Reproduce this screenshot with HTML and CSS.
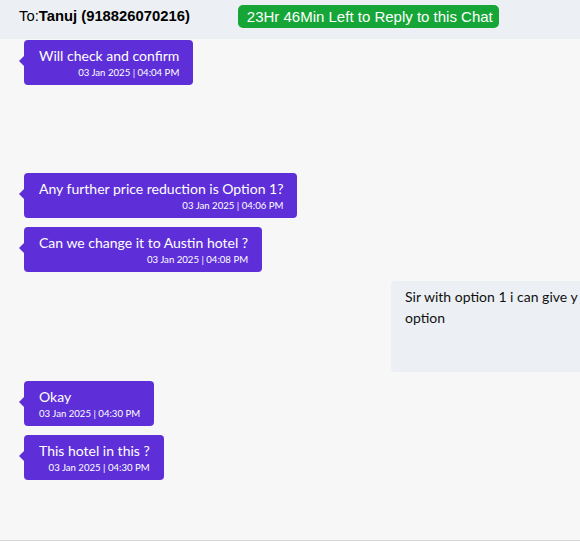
FILE: index.html
```html
<!DOCTYPE html>
<html>
<head>
<meta charset="utf-8">
<link rel="stylesheet" href="styles.css">
</head>
<body>
<div class="page">
  <header class="chat-header">
    <div class="to">To:<b>Tanuj (918826070216)</b></div>
    <div class="timer">23Hr 46Min Left to Reply to this Chat</div>
  </header>
  <main class="chat-body">
    <div class="row in first">
      <div class="bubble">
        <div class="msg">Will check and confirm</div>
        <div class="time">03 Jan 2025 | 04:04 PM</div>
      </div>
    </div>
    <div class="row in gap-big">
      <div class="bubble">
        <div class="msg">Any further price reduction is Option 1?</div>
        <div class="time">03 Jan 2025 | 04:06 PM</div>
      </div>
    </div>
    <div class="row in">
      <div class="bubble">
        <div class="msg">Can we change it to Austin hotel ?</div>
        <div class="time">03 Jan 2025 | 04:08 PM</div>
      </div>
    </div>
    <div class="row out">
      <div class="bubble-out">
        <div class="msg-out">Sir with option 1 i can give y<br>option</div>
      </div>
    </div>
    <div class="row in">
      <div class="bubble">
        <div class="msg">Okay</div>
        <div class="time">03 Jan 2025 | 04:30 PM</div>
      </div>
    </div>
    <div class="row in">
      <div class="bubble">
        <div class="msg">This hotel in this ?</div>
        <div class="time">03 Jan 2025 | 04:30 PM</div>
      </div>
    </div>
  </main>
</div>
</body>
</html>
```
FILE: styles.css
```css
html, body {
  margin: 0;
  padding: 0;
  background: #ffffff;
  overflow: hidden;
}
.page {
  width: 580px;
  overflow: hidden;
}
.chat-header {
  height: 39px;
  box-sizing: border-box;
  background: #eceff3;
  display: flex;
  align-items: flex-start;
  padding: 5px 0 0 19px;
  gap: 48px;
  font-family: "Liberation Sans", Arial, sans-serif;
}
.to {
  font-size: 14.8px;
  line-height: 23px;
  color: #000;
}
.to b {
  font-weight: bold;
}
.timer {
  background: #16a637;
  color: #fff;
  font-size: 15px;
  line-height: 23px;
  padding: 0 6px 0 9px;
  border-radius: 5px;
}
.chat-body {
  height: 502px;
  box-sizing: border-box;
  background: #f7f7f7;
  border-bottom: 1px solid #d6d6d6;
  padding: 1px 0 0 24px;
  display: flex;
  flex-direction: column;
  gap: 9px;
  font-family: "Lato", "Noto Sans", sans-serif;
}
.row {
  display: flex;
}
.row.gap-big {
  margin-top: 79px;
}
.row.out {
  padding-left: 367px;
}
.bubble {
  position: relative;
  background: #5e2fd8;
  color: #fff;
  border-radius: 4px;
  padding: 6px 14px 5px 15px;
  display: flex;
  flex-direction: column;
}
.bubble::before {
  content: "";
  position: absolute;
  left: -5px;
  top: 16px;
  border-top: 5px solid transparent;
  border-bottom: 5px solid transparent;
  border-right: 5px solid #5e2fd8;
}
.msg {
  font-size: 14px;
  line-height: 20px;
}
.time {
  font-size: 9.6px;
  line-height: 14px;
  text-align: right;
}
.bubble-out {
  flex: none;
  width: 300px;
  height: 91px;
  box-sizing: border-box;
  background: #eceff3;
  border-radius: 4px 0 0 4px;
  padding: 5px 0 0 14px;
  color: #111;
}
.msg-out {
  font-size: 14px;
  line-height: 21px;
  white-space: nowrap;
}
```
